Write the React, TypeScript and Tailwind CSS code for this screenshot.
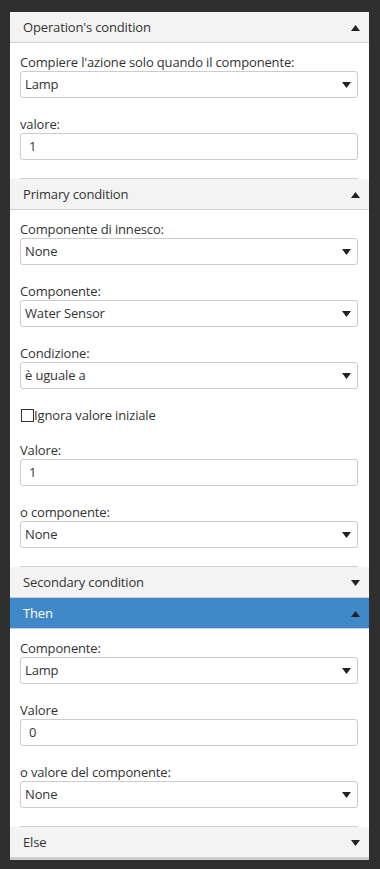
import React from "react"

const font = { fontFamily: '"Open Sans", "Noto Sans", sans-serif' }

function Arrow({ up = false }: { up?: boolean }) {
  return (
    <svg width="9" height="6" viewBox="0 0 9 6" className="shrink-0">
      {up ? <polygon points="0,6 9,6 4.5,0" fill="#222" /> : <polygon points="0,0 9,0 4.5,6" fill="#222" />}
    </svg>
  )
}

function Header({ title, open = false, active = false }: { title: string; open?: boolean; active?: boolean }) {
  return (
    <div
      className={
        "h-[31px] flex items-center justify-between pl-[13px] pr-[9px] pt-[1px] border-b border-[#cfcfcf] " +
        (active ? "bg-[#3f89c9] text-white" : "bg-[#f3f3f3] text-[#333]")
      }
    >
      <span className="text-[13px]">{title}</span>
      <Arrow up={open} />
    </div>
  )
}

function Select({ value }: { value: string }) {
  return (
    <div className="h-[27px] flex items-center justify-between pl-[4px] pr-[6px] pt-[1px] border border-[#cccccc] rounded-[3px] bg-white">
      <span className="text-[13px] text-[#333]">{value}</span>
      <Arrow />
    </div>
  )
}

function Input({ value }: { value: string }) {
  return (
    <div className="h-[27px] flex items-center pl-[8px] pt-[1px] border border-[#cccccc] rounded-[3px] bg-white">
      <span className="text-[13px] text-[#333]">{value}</span>
    </div>
  )
}

function Field({ label, children }: { label: string; children: React.ReactNode }) {
  return (
    <div className="mb-[18px]">
      <div className="text-[13px] leading-[17px] text-[#333]">{label}</div>
      {children}
    </div>
  )
}

function Section({ children }: { children: React.ReactNode }) {
  return (
    <div className="pl-[10px] pr-[11px] pt-[11px]">
      {children}
      <div className="border-b border-[#cfcfcf]" />
    </div>
  )
}

export default function App() {
  return (
    <div className="min-h-screen bg-[#2f2f2f] pl-[10px] pt-[12px] tracking-[-0.15px]" style={font}>
      <div className="w-[359px] bg-white border-b-2 border-[#cccccc]">
        <Header title="Operation's condition" open />
        <Section>
          <Field label="Compiere l'azione solo quando il componente:">
            <Select value="Lamp" />
          </Field>
          <Field label="valore:">
            <Input value="1" />
          </Field>
        </Section>

        <Header title="Primary condition" open />
        <Section>
          <Field label="Componente di innesco:">
            <Select value="None" />
          </Field>
          <Field label="Componente:">
            <Select value="Water Sensor" />
          </Field>
          <Field label="Condizione:">
            <Select value="è uguale a" />
          </Field>
          <label className="flex items-center mb-[18px] text-[13px] leading-[17px] text-[#333]">
            <span className="w-[13px] h-[13px] border border-[#333] bg-white ml-[1px]" />
            <span>Ignora valore iniziale</span>
          </label>
          <Field label="Valore:">
            <Input value="1" />
          </Field>
          <Field label="o componente:">
            <Select value="None" />
          </Field>
        </Section>

        <Header title="Secondary condition" />
        <Header title="Then" open active />
        <Section>
          <Field label="Componente:">
            <Select value="Lamp" />
          </Field>
          <Field label="Valore">
            <Input value="0" />
          </Field>
          <Field label="o valore del componente:">
            <Select value="None" />
          </Field>
        </Section>

        <Header title="Else" />
      </div>
    </div>
  )
}
